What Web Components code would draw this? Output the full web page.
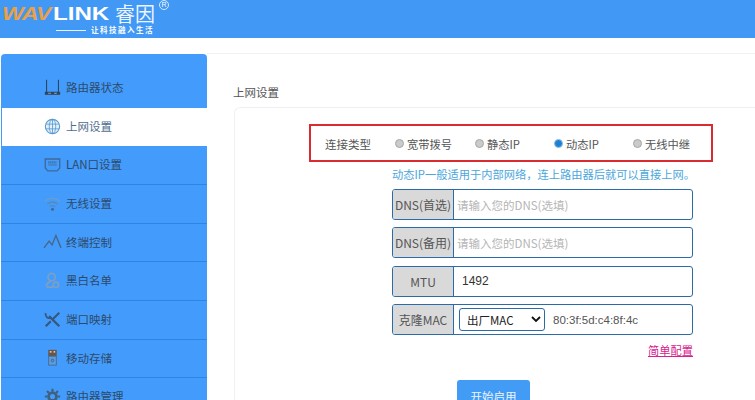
<!DOCTYPE html>
<html>
<head>
<meta charset="utf-8">
<style>
  html, body { margin: 0; padding: 0; background: #fff; overflow: hidden; }
  body { width: 755px; height: 400px; font-family: "Liberation Sans", "Noto Sans CJK SC", sans-serif; }
</style>
</head>
<body>
<router-page>
  <top-bar slot="top"></top-bar>
  <side-menu slot="side">
    <menu-item h="54" icon="router" first>路由器状态</menu-item>
    <menu-item h="38" icon="globe" active>上网设置</menu-item>
    <menu-item h="39" icon="lan">LAN口设置</menu-item>
    <menu-item h="39" icon="wifi">无线设置</menu-item>
    <menu-item h="38" icon="peaks">终端控制</menu-item>
    <menu-item h="39" icon="user">黑白名单</menu-item>
    <menu-item h="39" icon="tools">端口映射</menu-item>
    <menu-item h="38" icon="usb">移动存储</menu-item>
    <menu-item h="39" icon="gear">路由器管理</menu-item>
  </side-menu>
  <net-settings slot="main"></net-settings>
</router-page>

<script>
// layout shell
class RouterPage extends HTMLElement {
  connectedCallback() {
    this.attachShadow({ mode: 'open' });
    this.shadowRoot.innerHTML = `
      <style>
        :host { display: flex; flex-direction: column; width: 755px; height: 400px; overflow: hidden; }
        .body { display: flex; flex: 1; padding: 16px 0 0 1px; }
      </style>
      <slot name="top"></slot>
      <div class="body">
        <slot name="side"></slot>
        <slot name="main"></slot>
      </div>`;
  }
}

class TopBar extends HTMLElement {
  connectedCallback() {
    this.attachShadow({ mode: 'open' });
    this.shadowRoot.innerHTML = `
      <style>
        :host { display: flex; height: 38px; background: #4198f5; color: #fff; flex: none; align-items: flex-start; overflow: hidden; }
        .logo { display: flex; flex-direction: column; padding-left: 2px; }
        .row { display: flex; align-items: center; height: 22px; margin-top: 3px; }
        .wav, .link { display: inline-block; font: bold 18px/22px "Liberation Sans", sans-serif; transform-origin: left center; white-space: nowrap; }
        .wav { width: 51px; color: #e9a04a; font-style: italic; letter-spacing: -.5px; transform: scaleX(1.28); }
        .link { width: 57px; transform: scaleX(1.34); }
        .cn { font: 20px/22px "Noto Sans CJK SC", sans-serif; margin-left: 5px; color: #eef5fe; }
        .reg { box-sizing: border-box; font: 7px/8px "Liberation Sans", sans-serif; margin: -19px 0 0 4px; width: 10px; height: 10px; text-align: center; border: 1px solid #dbeafe; border-radius: 50%; }
        .slogan { display: flex; align-items: center; gap: 5px; margin: 0 0 0 54px; height: 10px; line-height: 10px; font: bold 7.5px/10px "Noto Sans CJK SC", sans-serif; letter-spacing: 1.5px; }
        .slogan i { display: block; width: 30px; height: 1px; background: #e8f1fd; }
      </style>
      <div class="logo">
        <div class="row">
          <span class="wav">WAV</span>
          <span class="link">LINK</span>
          <span class="cn">睿因</span>
          <span class="reg">R</span>
        </div>
        <div class="slogan"><i></i><span>让科技融入生活</span></div>
      </div>`;
  }
}

class SideMenu extends HTMLElement {
  connectedCallback() {
    this.attachShadow({ mode: 'open' });
    this.shadowRoot.innerHTML = `
      <style>
        :host { display: flex; flex-direction: column; width: 206px; flex: none; align-self: flex-start; background: #439cfb; border-radius: 4px 4px 0 0; overflow: hidden; }
      </style>
      <slot></slot>`;
  }
}

const ICONS = {
  router: '<path d="M3 1v15M17 1v15" stroke="#2f4560" stroke-width="1.3" fill="none"/><rect x="1" y="15" width="18" height="3.600" fill="#2f4560"/><path d="M5 16.800h3M12 16.800h3" stroke="#9fb2c6" stroke-width="1.100"/>',
  globe: '<circle cx="10" cy="10" r="8.400" fill="#e4f0fb" stroke="#5a9bd0" stroke-width="1.300"/><ellipse cx="10" cy="10" rx="3.800" ry="8.400" fill="none" stroke="#5a9bd0"/><path d="M2 7.200h16M2 12.800h16M10 1.600v16.800" stroke="#5a9bd0" fill="none"/>',
  lan: '<path d="M1.500 3.500h17v10.500l-3 3.500h-11l-3-3.500z" fill="none" stroke="#3f6a99" stroke-width="1.600"/><path d="M5 7.500h10" stroke="#3f6a99" stroke-width="2.400" stroke-dasharray="1.400 1"/><path d="M5 10.500h10" stroke="#3f6a99" stroke-width="1"/>',
  wifi: '<g fill="none" stroke="#6b9ccd" stroke-width="1.400"><path d="M1 7.500a13 13 0 0 1 18 0"/></g><g fill="none" stroke="#5a86b3" stroke-width="1.400"><path d="M4 10.800a8.500 8.500 0 0 1 12 0"/><path d="M7 13.800a4.200 4.200 0 0 1 6 0"/></g><circle cx="10" cy="16.800" r="1.800" fill="#3f6a99"/>',
  peaks: '<path d="M0 17.500l6-8 3.500 4.500 4.500-11 6 14.500" fill="none" stroke="#47688c" stroke-width="1.700"/>',
  user: '<circle cx="9" cy="6" r="4.300" fill="none" stroke="#7c9fc4" stroke-width="2"/><path d="M3 17c0-4 2-5 5-6" fill="none" stroke="#7c9fc4" stroke-width="2"/><circle cx="14" cy="15" r="3.200" fill="none" stroke="#7c9fc4" stroke-width="2"/><path d="M3 17.800h8" stroke="#7c9fc4" stroke-width="2"/>',
  tools: '<path d="M6 6l12 12" stroke="#36587f" stroke-width="2.600" fill="none"/><path d="M2 2.500a4.500 4.500 0 0 0 6 5.500" stroke="#36587f" stroke-width="2.200" fill="none"/><path d="M18 2L10.500 9.500M8 12l-6 6" stroke="#36587f" stroke-width="2.600" fill="none"/>',
  usb: '<rect x="5" y="1" width="10" height="7.500" fill="#6a5548"/><path d="M6.800 3.500h2M11.200 3.500h2" stroke="#eee" stroke-width="1.500"/><rect x="5.500" y="8.500" width="9" height="10.500" fill="#5f9bd6" stroke="#3f6a99"/><circle cx="10" cy="13.500" r="1.500" fill="none" stroke="#2f5d8f"/>',
  gear: '<circle cx="10" cy="10" r="4.600" fill="none" stroke="#40607f" stroke-width="3.200"/><path d="M10 1v3M10 16v3M1 10h3M16 10h3M3.600 3.600l2.200 2.200M14.200 14.200l2.200 2.200M16.400 3.600l-2.200 2.200M5.800 14.200l-2.200 2.200" stroke="#40607f" stroke-width="2.600"/>'
};

class MenuItem extends HTMLElement {
  connectedCallback() {
    const h = this.getAttribute('h');
    const icon = ICONS[this.getAttribute('icon')];
    this.attachShadow({ mode: 'open' });
    this.shadowRoot.innerHTML = `
      <style>
        :host { display: flex; align-items: center; box-sizing: border-box; height: ${h}px; padding: 0 0 2px 43px; gap: 5px; font: 11.5px "Noto Sans CJK SC", sans-serif; color: #2d4a6b; border-bottom: 1px solid #2f85e3; }
        :host([first]) { padding-top: 14px; border-bottom: 0; }
        :host([active]) { background: #fff; color: #4f6d8f; border-bottom: 0; border-left: 1px solid #439cfb; padding-left: 42px; }
        svg { width: 17px; height: 17px; flex: none; overflow: visible; }
      </style>
      <svg viewBox="0 0 20 20">${icon}</svg>
      <slot></slot>`;
  }
}

class NetSettings extends HTMLElement {
  connectedCallback() {
    this.attachShadow({ mode: 'open' });
    this.shadowRoot.innerHTML = `
      <style>
        :host { display: block; flex: 1; margin-top: -1px; border-top: 1px solid #f0f1f3; padding: 30px 0 0 26px; font: 11.5px "Noto Sans CJK SC", sans-serif; color: #555; }
        .title { height: 23px; line-height: 16px; }
        .panel { margin-left: 1px; border: 1px solid #eef0f2; border-right: 0; border-radius: 6px 0 0 0; height: 320px; padding: 16px 0 0 74px; }
        .type { box-sizing: border-box; width: 404px; height: 38px; border: 2px solid #d92b30; display: flex; align-items: center; padding: 1px 0 0 14px; }
        .type .lbl { width: 70px; flex: none; }
        .hint { margin: 4px 0 0 83px; height: 16px; line-height: 16px; font-size: 11.25px; color: #4aa6dc; white-space: nowrap; }
        .form { display: flex; flex-direction: column; gap: 7.4px; margin: 7px 0 0 83px; width: 301px; }
        .link { align-self: flex-end; margin-top: -1px; color: #d8218e; text-decoration: underline; font-size: 11.25px; line-height: 16px; }
        .go { box-sizing: border-box; width: 73px; height: 32px; margin: 22px 0 0 148px; background: #429cf6; color: #eaf4ff; border: 0; padding: 0; border-radius: 3px; display: block; font: 11.5px "Noto Sans CJK SC", sans-serif; }
      </style>
      <div class="title">上网设置</div>
      <div class="panel">
        <div class="type">
          <span class="lbl">连接类型</span>
          <radio-option w="80">宽带拨号</radio-option>
          <radio-option w="79">静态IP</radio-option>
          <radio-option w="79" checked>动态IP</radio-option>
          <radio-option w="60">无线中继</radio-option>
        </div>
        <div class="hint">动态IP一般适用于内部网络，连上路由器后就可以直接上网。</div>
        <div class="form">
          <field-row label="DNS(首选)" placeholder="请输入您的DNS(选填)"></field-row>
          <field-row label="DNS(备用)" placeholder="请输入您的DNS(选填)"></field-row>
          <field-row label="MTU" value="1492"></field-row>
          <field-row label="克隆MAC" mac="80:3f:5d:c4:8f:4c"></field-row>
          <span class="link">简单配置</span>
        </div>
        <button class="go">开始启用</button>
      </div>`;
  }
}

class RadioOption extends HTMLElement {
  connectedCallback() {
    const checked = this.hasAttribute('checked');
    this.attachShadow({ mode: 'open' });
    this.shadowRoot.innerHTML = `
      <style>
        :host { display: flex; align-items: center; gap: 3px; flex: none; width: ${this.getAttribute('w')}px; font-size: 11.25px; color: #555; white-space: nowrap; }
        i { display: block; box-sizing: border-box; width: 9px; height: 9px; border-radius: 50%; background: ${checked ? '#1f7fd0' : '#c9cbca'}; border: 1px solid ${checked ? '#8fc0e8' : '#a5a8a7'}; }
      </style>
      <i></i><slot></slot>`;
  }
}

class FieldRow extends HTMLElement {
  connectedCallback() {
    const label = this.getAttribute('label');
    const mac = this.getAttribute('mac');
    const value = this.getAttribute('value');
    const placeholder = this.getAttribute('placeholder');
    let body;
    if (mac) {
      body = `<span class="sel">出厂MAC<svg width="10" height="7" viewBox="0 0 10 7"><path d="M1 1l4 4 4-4" fill="none" stroke="#111" stroke-width="1.800"/></svg></span><span class="mac">${mac}</span>`;
    } else if (value) {
      body = `<span class="val">${value}</span>`;
    } else {
      body = `<span class="ph">${placeholder}</span>`;
    }
    this.attachShadow({ mode: 'open' });
    this.shadowRoot.innerHTML = `
      <style>
        :host { display: flex; box-sizing: border-box; height: 31px; border: 1px solid #2b6ca8; border-radius: 3px; background: #fff; overflow: hidden; font-size: 12px; }
        .lab { width: 61px; flex: none; box-sizing: border-box; background: #d9d9d9; border-right: 1px solid #2b6ca8; display: flex; align-items: center; justify-content: center; color: #555; white-space: nowrap; }
        .in { flex: 1; display: flex; align-items: center; padding-left: 3px; }
        .ph { color: #b5b5b5; font-size: 11.5px; }
        .val { color: #333; margin-left: 5px; font: 12px "Liberation Sans", sans-serif; }
        .sel { box-sizing: border-box; width: 86px; height: 23px; margin-left: 2px; border: 1px solid #2b6ca8; border-radius: 3px; display: flex; align-items: center; justify-content: space-between; padding: 0 3px 0 7px; color: #222; font-size: 11.5px; }
        .mac { margin-left: 8px; color: #555; font: 11.5px "Liberation Sans", sans-serif; }
      </style>
      <div class="lab">${label}</div>
      <div class="in">${body}</div>`;
  }
}

customElements.define('router-page', RouterPage);
customElements.define('top-bar', TopBar);
customElements.define('side-menu', SideMenu);
customElements.define('menu-item', MenuItem);
customElements.define('net-settings', NetSettings);
customElements.define('radio-option', RadioOption);
customElements.define('field-row', FieldRow);
</script>
</body>
</html>
